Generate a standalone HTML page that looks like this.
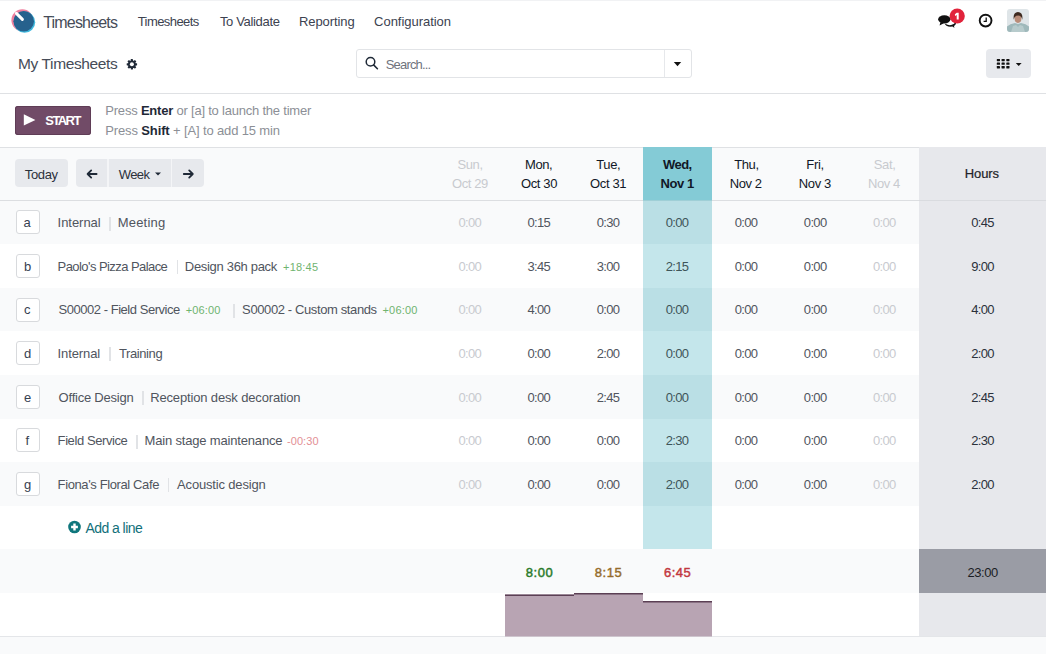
<!DOCTYPE html>
<html><head><meta charset="utf-8"><title>Timesheets</title>
<style>
html,body{margin:0;padding:0}
body{width:1046px;height:654px;overflow:hidden;position:relative;background:#fff;font-family:"Liberation Sans",sans-serif}
.a{position:absolute}
.t{position:absolute;white-space:pre;font-family:"Liberation Sans",sans-serif}
.t b{font-weight:700;color:#1f2937}
.key{position:absolute;left:15.5px;width:22px;height:22px;border:1px solid #d8dadd;border-radius:3px;background:#fff;box-sizing:content-box}
.sep{position:absolute;width:1.5px;height:14px;background:#e1e3e6}
svg{position:absolute;overflow:visible}
</style></head>
<body>
<!-- top faint line -->
<div class="a" style="left:0;top:0;width:1046px;height:1px;background:#f1f2f4"></div>

<!-- ===== NAVBAR ===== -->
<svg style="left:0;top:0" width="50" height="45" viewBox="0 0 50 45">
  <circle cx="22.3" cy="20.2" r="10.9" fill="#ef7f9e"/>
  <circle cx="24.6" cy="22.2" r="10.6" fill="#40b9de"/>
  <circle cx="23.7" cy="21.3" r="10.3" fill="#26618d"/>
  <line x1="16.4" y1="13.4" x2="22.4" y2="19.4" stroke="#fff" stroke-width="3" stroke-linecap="round"/>
</svg>

<!-- chat icon -->
<svg style="left:930px;top:0" width="70" height="40" viewBox="0 0 70 40">
  <ellipse cx="20.4" cy="22.9" rx="5.6" ry="3.9" fill="#111"/>
  <ellipse cx="19.8" cy="21.3" rx="5.6" ry="3.9" fill="#fff"/>
  <path d="M21.6 25.6 L24.4 28 L23.6 24.2 Z" fill="#111"/>
  <ellipse cx="14.3" cy="19.3" rx="6.5" ry="4.4" fill="#fff"/>
  <ellipse cx="14.3" cy="19.3" rx="6.2" ry="4.1" fill="#111"/>
  <path d="M10.4 22.2 L9.6 25.4 L13.8 23.2 Z" fill="#111"/>
  <circle cx="27.2" cy="16" r="7.6" fill="#e1233b"/>
  <path d="M26.7 12.8 H28.7 V19.6 H26.7 V15.1 L25.1 15.9 L24.9 14.3 Z" fill="#fff"/>
</svg>

<!-- clock -->
<svg style="left:970px;top:5px" width="30" height="30" viewBox="0 0 30 30">
  <circle cx="15.6" cy="15.6" r="5.9" fill="none" stroke="#111" stroke-width="1.9"/>
  <path d="M16.2 12.6 V16.4 H13.6" fill="none" stroke="#111" stroke-width="1.3"/>
</svg>

<!-- avatar -->
<svg style="left:1007px;top:9px" width="22" height="23" viewBox="0 0 22 23">
  <defs><clipPath id="av"><rect x="0" y="0" width="22" height="23" rx="3"/></clipPath></defs>
  <g clip-path="url(#av)">
    <rect width="22" height="23" fill="#dfe5e8"/>
    <path d="M0 23 L0 17.5 Q3 14.5 8 14 L11 15 L14 14 Q19 14.5 22 17.5 L22 23 Z" fill="#9fb9bb"/>
    <path d="M4 23 L6 17 L9 16 L11 18 L13 16 L16 17 L18 23 Z" fill="#b7cbcc"/>
    <ellipse cx="11" cy="9.6" rx="3.4" ry="4.3" fill="#b98c78"/>
    <path d="M6.8 10.8 Q5.6 3.4 11 3 Q16.4 3.4 15.2 10.8 Q14.8 6.6 11 6.4 Q7.2 6.6 6.8 10.8 Z" fill="#3e2a20"/>
  </g>
</svg>

<!-- ===== CONTROL PANEL ===== -->
<!-- gear -->
<svg style="left:120px;top:52px" width="24" height="24" viewBox="0 0 24 24">
  <g transform="translate(11.9 12.3)">
    <g fill="#1f2937">
      <rect x="-1.1" y="-5.2" width="2.2" height="10.4" rx="0.4"/>
      <rect x="-1.1" y="-5.2" width="2.2" height="10.4" rx="0.4" transform="rotate(45)"/>
      <rect x="-1.1" y="-5.2" width="2.2" height="10.4" rx="0.4" transform="rotate(90)"/>
      <rect x="-1.1" y="-5.2" width="2.2" height="10.4" rx="0.4" transform="rotate(135)"/>
      <circle r="3.9"/>
    </g>
    <circle r="2" fill="#fff"/>
  </g>
</svg>

<!-- search box -->
<div class="a" style="left:355.5px;top:49px;width:334px;height:27px;border:1px solid #e2e4e7;border-radius:3px;background:#fff"></div>
<div class="a" style="left:664px;top:50px;width:1px;height:27px;background:#e6e8eb"></div>
<svg style="left:360px;top:52px" width="24" height="24" viewBox="0 0 24 24">
  <circle cx="10.5" cy="9.8" r="4.3" fill="none" stroke="#1f2937" stroke-width="1.5"/>
  <line x1="13.6" y1="12.9" x2="17.4" y2="16.7" stroke="#1f2937" stroke-width="1.6" stroke-linecap="round"/>
</svg>
<svg style="left:670px;top:58px" width="16" height="12" viewBox="0 0 16 12">
  <path d="M3.8 4 L11.2 4 L7.5 8.2 Z" fill="#111"/>
</svg>

<!-- view switcher -->
<div class="a" style="left:985.5px;top:49px;width:45.5px;height:29px;border-radius:4px;background:#e7e9ed"></div>
<svg style="left:990px;top:52px" width="40" height="24" viewBox="0 0 40 24">
  <g fill="#111">
    <rect x="6.80" y="6.90" width="3.2" height="2.3" rx="0.4"/><rect x="11.55" y="6.90" width="3.2" height="2.3" rx="0.4"/><rect x="16.30" y="6.90" width="3.2" height="2.3" rx="0.4"/><rect x="6.80" y="10.50" width="3.2" height="2.3" rx="0.4"/><rect x="11.55" y="10.50" width="3.2" height="2.3" rx="0.4"/><rect x="16.30" y="10.50" width="3.2" height="2.3" rx="0.4"/><rect x="6.80" y="14.10" width="3.2" height="2.3" rx="0.4"/><rect x="11.55" y="14.10" width="3.2" height="2.3" rx="0.4"/><rect x="16.30" y="14.10" width="3.2" height="2.3" rx="0.4"/>
    <path d="M25.8 11 L31.6 11 L28.7 14 Z"/>
  </g>
</svg>

<div class="a" style="left:0;top:93px;width:1046px;height:1px;background:#dfe1e4"></div>

<!-- ===== TIMER ===== -->
<div class="a" style="left:15px;top:105.5px;width:75.5px;height:29px;border-radius:3px;background:#714b67;box-shadow:inset 0 0 0 1px #5f3d56"></div>
<svg style="left:20px;top:110px" width="20" height="20" viewBox="0 0 20 20">
  <path d="M3.8 4.2 L15.4 9.9 L3.8 15.6 Z" fill="#fff"/>
</svg>

<div class="a" style="left:0;top:147px;width:1046px;height:1px;background:#dfe1e4"></div>

<!-- ===== GRID ===== -->
<div class="a" style="left:0;top:148px;width:1046px;height:52px;background:#f9fafb"></div>
<div class="a" style="left:0;top:200px;width:1046px;height:1px;background:#dcdee1"></div>

<!-- row backgrounds -->
<div class="a" style="left:0;top:201px;width:1046px;height:43px;background:#f9fafb"></div>
<div class="a" style="left:0;top:288px;width:1046px;height:43px;background:#f9fafb"></div>
<div class="a" style="left:0;top:375px;width:1046px;height:44px;background:#f9fafb"></div>
<div class="a" style="left:0;top:462px;width:1046px;height:44px;background:#f9fafb"></div>
<div class="a" style="left:0;top:549px;width:1046px;height:44px;background:#f9fafb"></div>
<div class="a" style="left:0;top:637px;width:1046px;height:17px;background:#f9fafb"></div>
<div class="a" style="left:0;top:636px;width:1046px;height:1px;background:#e4e6e9"></div>

<!-- today column -->
<div class="a" style="left:643px;top:147px;width:69px;height:53px;background:#84cbd6"></div>
<div class="a" style="left:643px;top:200px;width:69px;height:1px;background:#9fcfd6"></div>
<div class="a" style="left:643px;top:201px;width:69px;height:348px;background:#c4e6eb"></div>
<div class="a" style="left:643px;top:201px;width:69px;height:43px;background:#badfe5"></div>
<div class="a" style="left:643px;top:288px;width:69px;height:43px;background:#badfe5"></div>
<div class="a" style="left:643px;top:375px;width:69px;height:44px;background:#badfe5"></div>
<div class="a" style="left:643px;top:462px;width:69px;height:44px;background:#badfe5"></div>

<!-- hours column -->
<div class="a" style="left:919px;top:147px;width:127px;height:489px;background:#e7e8ec"></div>
<div class="a" style="left:919px;top:200px;width:127px;height:1px;background:#d9dbdf"></div>
<div class="a" style="left:919px;top:549px;width:127px;height:44px;background:#9a9ca5"></div>

<!-- buttons -->
<div class="a" style="left:15px;top:159px;width:53px;height:28px;border-radius:4px;background:#e7e9ed"></div>
<div class="a" style="left:76px;top:159px;width:128px;height:28px;border-radius:4px;background:#e7e9ed"></div>
<div class="a" style="left:107px;top:159px;width:1.5px;height:28px;background:#f4f5f7"></div>
<div class="a" style="left:170.5px;top:159px;width:1.5px;height:28px;background:#f4f5f7"></div>
<svg style="left:76px;top:159px" width="128" height="28" viewBox="0 0 128 28">
  <g fill="none" stroke="#1f2937" stroke-width="1.8" stroke-linecap="round" stroke-linejoin="round">
    <path d="M20.6 15 H11.6 M15.2 11.4 L11.6 15 L15.2 18.6"/>
    <path d="M107.8 15 H116.8 M113.2 11.4 L116.8 15 L113.2 18.6"/>
  </g>
  <path d="M79 13.4 L85 13.4 L82 16.6 Z" fill="#1f2937"/>
</svg>

<!-- row keys and separators -->
<div class="key" style="top:210.3px"></div>
<div class="key" style="top:253.9px"></div>
<div class="key" style="top:297.5px"></div>
<div class="key" style="top:341.1px"></div>
<div class="key" style="top:384.7px"></div>
<div class="key" style="top:428.3px"></div>
<div class="key" style="top:471.9px"></div>

<div class="sep" style="left:109.2px;top:216.5px"></div>
<div class="sep" style="left:176.5px;top:260.1px"></div>
<div class="sep" style="left:233px;top:303.7px"></div>
<div class="sep" style="left:109.2px;top:347.3px"></div>
<div class="sep" style="left:142px;top:390.9px"></div>
<div class="sep" style="left:136px;top:434.5px"></div>
<div class="sep" style="left:167.5px;top:478.1px"></div>

<!-- add a line icon -->
<svg style="left:64px;top:517px" width="20" height="20" viewBox="0 0 20 20">
  <circle cx="10.5" cy="10" r="6.3" fill="#0f767c"/>
  <path d="M10.5 6.6 V13.4 M7.1 10 H13.9" stroke="#fff" stroke-width="2.4"/>
</svg>

<!-- bars -->
<svg style="left:0;top:580px" width="1046" height="60" viewBox="0 580 1046 60">
  <rect x="505" y="594.5" width="69" height="42" fill="#b8a4b3"/>
  <rect x="574" y="593" width="69" height="43.5" fill="#b8a4b3"/>
  <rect x="643" y="601" width="69" height="35.5" fill="#b8a4b3"/>
  <path d="M505 595.2 H574 M574 593.8 H643 M643 601.8 H712" stroke="#5b3f54" stroke-width="1.6" fill="none"/>
</svg>

<!-- right edge line -->


<div class="t" style="left:43.20px;top:12.80px;font-size:16px;line-height:20px;color:#464c58;letter-spacing:-0.811px">Timesheets</div>
<div class="t" style="left:137.70px;top:14.30px;font-size:13px;line-height:16px;color:#3c4250;letter-spacing:-0.568px">Timesheets</div>
<div class="t" style="left:219.90px;top:14.30px;font-size:13px;line-height:16px;color:#3c4250;letter-spacing:-0.333px">To Validate</div>
<div class="t" style="left:299.00px;top:14.30px;font-size:13px;line-height:16px;color:#3c4250;letter-spacing:-0.080px">Reporting</div>
<div class="t" style="left:374.10px;top:14.30px;font-size:13px;line-height:16px;color:#3c4250;letter-spacing:-0.033px">Configuration</div>
<div class="t" style="left:18.00px;top:54.30px;font-size:15.5px;line-height:19px;color:#464c58;letter-spacing:-0.379px">My Timesheets</div>
<div class="t" style="left:385.70px;top:56.70px;font-size:13px;line-height:16px;color:#6f737d;letter-spacing:-0.814px">Search...</div>
<div class="t" style="left:45.30px;top:113.00px;font-size:13px;line-height:16px;color:#ffffff;letter-spacing:-1.581px;font-weight:700">START</div>
<div class="t" style="left:105.30px;top:103.20px;font-size:13px;line-height:16px;color:#8c8f96;letter-spacing:-0.212px">Press <b>Enter</b> or [a] to launch the timer</div>
<div class="t" style="left:105.30px;top:122.80px;font-size:13px;line-height:16px;color:#8c8f96;letter-spacing:-0.136px">Press <b>Shift</b> + [A] to add 15 min</div>
<div class="t" style="left:24.80px;top:166.90px;font-size:13px;line-height:16px;color:#2b313b;letter-spacing:-0.372px">Today</div>
<div class="t" style="left:118.80px;top:166.90px;font-size:13px;line-height:16px;color:#2b313b;letter-spacing:-0.632px">Week</div>
<div class="t" style="left:457.59px;top:157.40px;font-size:13px;line-height:16px;color:#c8cacf;letter-spacing:-0.436px">Sun,</div>
<div class="t" style="left:451.92px;top:176.00px;font-size:13px;line-height:16px;color:#c8cacf;letter-spacing:-0.381px">Oct 29</div>
<div class="t" style="left:525.12px;top:157.40px;font-size:13px;line-height:16px;color:#111827;letter-spacing:-0.455px">Mon,</div>
<div class="t" style="left:521.00px;top:176.00px;font-size:13px;line-height:16px;color:#111827;letter-spacing:-0.381px">Oct 30</div>
<div class="t" style="left:596.32px;top:157.40px;font-size:13px;line-height:16px;color:#111827;letter-spacing:-0.415px">Tue,</div>
<div class="t" style="left:590.08px;top:176.00px;font-size:13px;line-height:16px;color:#111827;letter-spacing:-0.381px">Oct 31</div>
<div class="t" style="left:662.89px;top:157.40px;font-size:13px;line-height:16px;color:#111827;letter-spacing:-0.503px;font-weight:700">Wed,</div>
<div class="t" style="left:660.53px;top:176.00px;font-size:13px;line-height:16px;color:#111827;letter-spacing:-0.440px;font-weight:700">Nov 1</div>
<div class="t" style="left:734.25px;top:157.40px;font-size:13px;line-height:16px;color:#111827;letter-spacing:-0.423px">Thu,</div>
<div class="t" style="left:729.77px;top:176.00px;font-size:13px;line-height:16px;color:#111827;letter-spacing:-0.409px">Nov 2</div>
<div class="t" style="left:806.25px;top:157.40px;font-size:13px;line-height:16px;color:#111827;letter-spacing:-0.286px">Fri,</div>
<div class="t" style="left:798.85px;top:176.00px;font-size:13px;line-height:16px;color:#111827;letter-spacing:-0.409px">Nov 3</div>
<div class="t" style="left:873.79px;top:157.40px;font-size:13px;line-height:16px;color:#c8cacf;letter-spacing:-0.375px">Sat,</div>
<div class="t" style="left:867.93px;top:176.00px;font-size:13px;line-height:16px;color:#c8cacf;letter-spacing:-0.409px">Nov 4</div>
<div class="t" style="left:964.80px;top:166.10px;font-size:13px;line-height:16px;color:#222328;letter-spacing:-0.144px;-webkit-text-stroke:0.2px #222328">Hours</div>
<div class="t" style="left:23.50px;top:215.20px;font-size:13px;line-height:16px;color:#374151">a</div>
<div class="t" style="left:57.60px;top:215.20px;font-size:13px;line-height:16px;color:#50555e;letter-spacing:-0.039px">Internal</div>
<div class="t" style="left:117.70px;top:215.20px;font-size:13px;line-height:16px;color:#50555e;letter-spacing:0.213px">Meeting</div>
<div class="t" style="left:458.47px;top:215.20px;font-size:13px;line-height:16px;color:#c8cacf;letter-spacing:-0.669px">0:00</div>
<div class="t" style="left:527.55px;top:215.20px;font-size:13px;line-height:16px;color:#50555e;letter-spacing:-0.669px">0:15</div>
<div class="t" style="left:596.63px;top:215.20px;font-size:13px;line-height:16px;color:#50555e;letter-spacing:-0.669px">0:30</div>
<div class="t" style="left:665.71px;top:215.20px;font-size:13px;line-height:16px;color:#3e5559;letter-spacing:-0.669px">0:00</div>
<div class="t" style="left:734.79px;top:215.20px;font-size:13px;line-height:16px;color:#50555e;letter-spacing:-0.669px">0:00</div>
<div class="t" style="left:803.87px;top:215.20px;font-size:13px;line-height:16px;color:#50555e;letter-spacing:-0.669px">0:00</div>
<div class="t" style="left:872.95px;top:215.20px;font-size:13px;line-height:16px;color:#c8cacf;letter-spacing:-0.669px">0:00</div>
<div class="t" style="left:971.17px;top:215.20px;font-size:13px;line-height:16px;color:#2b313b;letter-spacing:-0.669px">0:45</div>
<div class="t" style="left:24.00px;top:258.80px;font-size:13px;line-height:16px;color:#374151">b</div>
<div class="t" style="left:57.60px;top:258.80px;font-size:13px;line-height:16px;color:#50555e;letter-spacing:-0.566px">Paolo&#x27;s Pizza Palace</div>
<div class="t" style="left:184.80px;top:258.80px;font-size:13px;line-height:16px;color:#50555e;letter-spacing:-0.310px">Design 36h pack</div>
<div class="t" style="left:283.10px;top:259.80px;font-size:11px;line-height:14px;color:#6fb46f;letter-spacing:0.193px">+18:45</div>
<div class="t" style="left:458.47px;top:258.80px;font-size:13px;line-height:16px;color:#c8cacf;letter-spacing:-0.669px">0:00</div>
<div class="t" style="left:527.55px;top:258.80px;font-size:13px;line-height:16px;color:#50555e;letter-spacing:-0.669px">3:45</div>
<div class="t" style="left:596.63px;top:258.80px;font-size:13px;line-height:16px;color:#50555e;letter-spacing:-0.669px">3:00</div>
<div class="t" style="left:665.71px;top:258.80px;font-size:13px;line-height:16px;color:#3e5559;letter-spacing:-0.669px">2:15</div>
<div class="t" style="left:734.79px;top:258.80px;font-size:13px;line-height:16px;color:#50555e;letter-spacing:-0.669px">0:00</div>
<div class="t" style="left:803.87px;top:258.80px;font-size:13px;line-height:16px;color:#50555e;letter-spacing:-0.669px">0:00</div>
<div class="t" style="left:872.95px;top:258.80px;font-size:13px;line-height:16px;color:#c8cacf;letter-spacing:-0.669px">0:00</div>
<div class="t" style="left:971.17px;top:258.80px;font-size:13px;line-height:16px;color:#2b313b;letter-spacing:-0.669px">9:00</div>
<div class="t" style="left:24.00px;top:302.40px;font-size:13px;line-height:16px;color:#374151">c</div>
<div class="t" style="left:58.60px;top:302.40px;font-size:13px;line-height:16px;color:#50555e;letter-spacing:-0.471px">S00002 - Field Service</div>
<div class="t" style="left:185.80px;top:303.40px;font-size:11px;line-height:14px;color:#6fb46f;letter-spacing:0.113px">+06:00</div>
<div class="t" style="left:242.10px;top:302.40px;font-size:13px;line-height:16px;color:#50555e;letter-spacing:-0.385px">S00002 - Custom stands</div>
<div class="t" style="left:382.50px;top:303.40px;font-size:11px;line-height:14px;color:#6fb46f;letter-spacing:0.193px">+06:00</div>
<div class="t" style="left:458.47px;top:302.40px;font-size:13px;line-height:16px;color:#c8cacf;letter-spacing:-0.669px">0:00</div>
<div class="t" style="left:527.55px;top:302.40px;font-size:13px;line-height:16px;color:#50555e;letter-spacing:-0.669px">4:00</div>
<div class="t" style="left:596.63px;top:302.40px;font-size:13px;line-height:16px;color:#50555e;letter-spacing:-0.669px">0:00</div>
<div class="t" style="left:665.71px;top:302.40px;font-size:13px;line-height:16px;color:#3e5559;letter-spacing:-0.669px">0:00</div>
<div class="t" style="left:734.79px;top:302.40px;font-size:13px;line-height:16px;color:#50555e;letter-spacing:-0.669px">0:00</div>
<div class="t" style="left:803.87px;top:302.40px;font-size:13px;line-height:16px;color:#50555e;letter-spacing:-0.669px">0:00</div>
<div class="t" style="left:872.95px;top:302.40px;font-size:13px;line-height:16px;color:#c8cacf;letter-spacing:-0.669px">0:00</div>
<div class="t" style="left:971.17px;top:302.40px;font-size:13px;line-height:16px;color:#2b313b;letter-spacing:-0.669px">4:00</div>
<div class="t" style="left:24.00px;top:346.00px;font-size:13px;line-height:16px;color:#374151">d</div>
<div class="t" style="left:57.60px;top:346.00px;font-size:13px;line-height:16px;color:#50555e;letter-spacing:-0.110px">Internal</div>
<div class="t" style="left:119.00px;top:346.00px;font-size:13px;line-height:16px;color:#50555e;letter-spacing:-0.408px">Training</div>
<div class="t" style="left:458.47px;top:346.00px;font-size:13px;line-height:16px;color:#c8cacf;letter-spacing:-0.669px">0:00</div>
<div class="t" style="left:527.55px;top:346.00px;font-size:13px;line-height:16px;color:#50555e;letter-spacing:-0.669px">0:00</div>
<div class="t" style="left:596.63px;top:346.00px;font-size:13px;line-height:16px;color:#50555e;letter-spacing:-0.669px">2:00</div>
<div class="t" style="left:665.71px;top:346.00px;font-size:13px;line-height:16px;color:#3e5559;letter-spacing:-0.669px">0:00</div>
<div class="t" style="left:734.79px;top:346.00px;font-size:13px;line-height:16px;color:#50555e;letter-spacing:-0.669px">0:00</div>
<div class="t" style="left:803.87px;top:346.00px;font-size:13px;line-height:16px;color:#50555e;letter-spacing:-0.669px">0:00</div>
<div class="t" style="left:872.95px;top:346.00px;font-size:13px;line-height:16px;color:#c8cacf;letter-spacing:-0.669px">0:00</div>
<div class="t" style="left:971.17px;top:346.00px;font-size:13px;line-height:16px;color:#2b313b;letter-spacing:-0.669px">2:00</div>
<div class="t" style="left:24.00px;top:389.60px;font-size:13px;line-height:16px;color:#374151">e</div>
<div class="t" style="left:58.60px;top:389.60px;font-size:13px;line-height:16px;color:#50555e;letter-spacing:-0.222px">Office Design</div>
<div class="t" style="left:150.20px;top:389.60px;font-size:13px;line-height:16px;color:#50555e;letter-spacing:-0.150px">Reception desk decoration</div>
<div class="t" style="left:458.47px;top:389.60px;font-size:13px;line-height:16px;color:#c8cacf;letter-spacing:-0.669px">0:00</div>
<div class="t" style="left:527.55px;top:389.60px;font-size:13px;line-height:16px;color:#50555e;letter-spacing:-0.669px">0:00</div>
<div class="t" style="left:596.63px;top:389.60px;font-size:13px;line-height:16px;color:#50555e;letter-spacing:-0.669px">2:45</div>
<div class="t" style="left:665.71px;top:389.60px;font-size:13px;line-height:16px;color:#3e5559;letter-spacing:-0.669px">0:00</div>
<div class="t" style="left:734.79px;top:389.60px;font-size:13px;line-height:16px;color:#50555e;letter-spacing:-0.669px">0:00</div>
<div class="t" style="left:803.87px;top:389.60px;font-size:13px;line-height:16px;color:#50555e;letter-spacing:-0.669px">0:00</div>
<div class="t" style="left:872.95px;top:389.60px;font-size:13px;line-height:16px;color:#c8cacf;letter-spacing:-0.669px">0:00</div>
<div class="t" style="left:971.17px;top:389.60px;font-size:13px;line-height:16px;color:#2b313b;letter-spacing:-0.669px">2:45</div>
<div class="t" style="left:25.50px;top:433.20px;font-size:13px;line-height:16px;color:#374151">f</div>
<div class="t" style="left:57.60px;top:433.20px;font-size:13px;line-height:16px;color:#50555e;letter-spacing:-0.409px">Field Service</div>
<div class="t" style="left:144.60px;top:433.20px;font-size:13px;line-height:16px;color:#50555e;letter-spacing:-0.177px">Main stage maintenance</div>
<div class="t" style="left:286.90px;top:434.20px;font-size:11px;line-height:14px;color:#e38f95;letter-spacing:0.106px">-00:30</div>
<div class="t" style="left:458.47px;top:433.20px;font-size:13px;line-height:16px;color:#c8cacf;letter-spacing:-0.669px">0:00</div>
<div class="t" style="left:527.55px;top:433.20px;font-size:13px;line-height:16px;color:#50555e;letter-spacing:-0.669px">0:00</div>
<div class="t" style="left:596.63px;top:433.20px;font-size:13px;line-height:16px;color:#50555e;letter-spacing:-0.669px">0:00</div>
<div class="t" style="left:665.71px;top:433.20px;font-size:13px;line-height:16px;color:#3e5559;letter-spacing:-0.669px">2:30</div>
<div class="t" style="left:734.79px;top:433.20px;font-size:13px;line-height:16px;color:#50555e;letter-spacing:-0.669px">0:00</div>
<div class="t" style="left:803.87px;top:433.20px;font-size:13px;line-height:16px;color:#50555e;letter-spacing:-0.669px">0:00</div>
<div class="t" style="left:872.95px;top:433.20px;font-size:13px;line-height:16px;color:#c8cacf;letter-spacing:-0.669px">0:00</div>
<div class="t" style="left:971.17px;top:433.20px;font-size:13px;line-height:16px;color:#2b313b;letter-spacing:-0.669px">2:30</div>
<div class="t" style="left:24.00px;top:476.80px;font-size:13px;line-height:16px;color:#374151">g</div>
<div class="t" style="left:57.60px;top:476.80px;font-size:13px;line-height:16px;color:#50555e;letter-spacing:-0.381px">Fiona&#x27;s Floral Cafe</div>
<div class="t" style="left:177.10px;top:476.80px;font-size:13px;line-height:16px;color:#50555e;letter-spacing:-0.173px">Acoustic design</div>
<div class="t" style="left:458.47px;top:476.80px;font-size:13px;line-height:16px;color:#c8cacf;letter-spacing:-0.669px">0:00</div>
<div class="t" style="left:527.55px;top:476.80px;font-size:13px;line-height:16px;color:#50555e;letter-spacing:-0.669px">0:00</div>
<div class="t" style="left:596.63px;top:476.80px;font-size:13px;line-height:16px;color:#50555e;letter-spacing:-0.669px">0:00</div>
<div class="t" style="left:665.71px;top:476.80px;font-size:13px;line-height:16px;color:#3e5559;letter-spacing:-0.669px">2:00</div>
<div class="t" style="left:734.79px;top:476.80px;font-size:13px;line-height:16px;color:#50555e;letter-spacing:-0.669px">0:00</div>
<div class="t" style="left:803.87px;top:476.80px;font-size:13px;line-height:16px;color:#50555e;letter-spacing:-0.669px">0:00</div>
<div class="t" style="left:872.95px;top:476.80px;font-size:13px;line-height:16px;color:#c8cacf;letter-spacing:-0.669px">0:00</div>
<div class="t" style="left:971.17px;top:476.80px;font-size:13px;line-height:16px;color:#2b313b;letter-spacing:-0.669px">2:00</div>
<div class="t" style="left:85.40px;top:519.00px;font-size:14px;line-height:18px;color:#11707a;letter-spacing:-0.542px">Add a line</div>
<div class="t" style="left:525.68px;top:564.70px;font-size:13px;line-height:16px;color:#267a26;letter-spacing:0.576px;-webkit-text-stroke:0.45px #2c7a2c">8:00</div>
<div class="t" style="left:594.71px;top:564.70px;font-size:13px;line-height:16px;color:#8f6b2e;letter-spacing:0.609px;-webkit-text-stroke:0.45px #9a6d2a">8:15</div>
<div class="t" style="left:663.94px;top:564.70px;font-size:13px;line-height:16px;color:#c2353f;letter-spacing:0.509px;-webkit-text-stroke:0.45px #c33a3f">6:45</div>
<div class="t" style="left:967.40px;top:564.70px;font-size:13px;line-height:16px;color:#1a1d24;letter-spacing:-0.425px">23:00</div>
</body></html>
